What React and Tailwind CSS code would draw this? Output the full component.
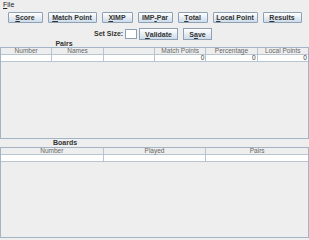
import React from "react";

const font = { fontFamily: '"Liberation Sans", Arial, sans-serif' };

function Btn({ width, mnemonic, rest, pre = "" }) {
  return (
    <button
      className={`h-[11px] ${width} flex items-center justify-center border border-[#8da0b4] bg-gradient-to-b from-[#ffffff] to-[#cddcea] text-[7px] font-bold text-[#333333] leading-none rounded-[1px]`}
    >
      {pre}
      <span className="underline">{mnemonic}</span>
      {rest}
    </button>
  );
}

function Table({ columns, values }) {
  return (
    <div className="flex-1 border border-[#a3b4c5] bg-[#eeeeee] flex flex-col">
      <div className="flex h-[7px] bg-[#eeeeee] border-b border-[#b8c4d0]">
        {columns.map((c, i) => (
          <div
            key={i}
            className="flex-1 border-r border-[#b8c4d0] last:border-r-0 text-[6.5px] leading-[6px] text-[#666666] text-center"
          >
            {c}
          </div>
        ))}
      </div>
      <div className="flex h-[7px] bg-white border-b border-[#b8c4d0]">
        {columns.map((c, i) => (
          <div
            key={i}
            className="flex-1 border-r border-[#b8c4d0] last:border-r-0 text-[6.5px] leading-[6px] text-[#333333] text-right pr-[1px]"
          >
            {values ? values[i] : ""}
          </div>
        ))}
      </div>
    </div>
  );
}

export default function App() {
  return (
    <div className="w-[309px] h-[240px] bg-[#eeeeee] flex flex-col overflow-hidden" style={font}>
      <div className="h-[10px] flex items-center px-[3px] text-[7px] text-[#222222]">
        <span className="underline">F</span>ile
      </div>
      <div className="flex justify-center gap-[5px] mt-[2px]">
        <Btn width="w-[35px]" mnemonic="S" rest="core" />
        <Btn width="w-[49px]" mnemonic="M" rest="atch Point" />
        <Btn width="w-[31px]" mnemonic="X" rest="IMP" />
        <Btn width="w-[35px]" pre="IMP" mnemonic="-" rest="Par" />
        <Btn width="w-[30px]" mnemonic="T" rest="otal" />
        <Btn width="w-[45px]" mnemonic="L" rest="ocal Point" />
        <Btn width="w-[39px]" mnemonic="R" rest="esults" />
      </div>
      <div className="flex items-center mt-[5px] pl-[94px] h-[12px]">
        <span className="text-[7px] font-bold text-[#333333] w-[31px]">Set Size:</span>
        <div className="w-[12px] h-[10px] bg-white border border-[#8da0b4]"></div>
        <div className="ml-[2px]">
          <button className="h-[12px] w-[39px] flex items-center justify-center border border-[#8da0b4] bg-gradient-to-b from-[#ffffff] to-[#cddcea] text-[7px] font-bold text-[#333333] leading-none">
            <span className="underline">V</span>alidate
          </button>
        </div>
        <div className="ml-[5px]">
          <button className="h-[12px] w-[29px] flex items-center justify-center border border-[#8da0b4] bg-gradient-to-b from-[#ffffff] to-[#cddcea] text-[7px] font-bold text-[#333333] leading-none">
            S<span className="underline">a</span>ve
          </button>
        </div>
      </div>
      <div className="w-[128px] text-center text-[7px] font-bold text-[#333333] leading-[7px]">
        Pairs
      </div>
      <div className="h-[92px] flex">
        <Table
          columns={["Number", "Names", "", "Match Points", "Percentage", "Local Points"]}
          values={["", "", "", "0", "0", "0"]}
        />
      </div>
      <div className="w-[130px] text-center text-[7px] font-bold text-[#333333] leading-[8px]">
        Boards
      </div>
      <div className="h-[91px] flex">
        <Table columns={["Number", "Played", "Pairs"]} />
      </div>
    </div>
  );
}
